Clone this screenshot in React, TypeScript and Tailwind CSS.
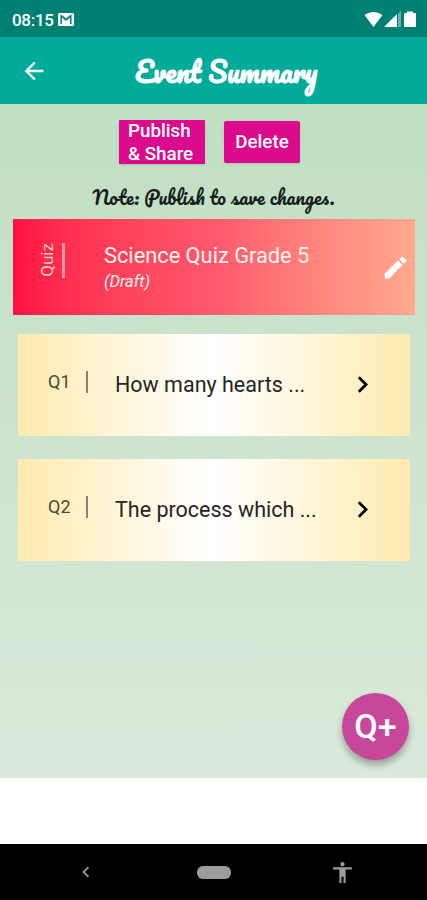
import React from "react";
import { MdAccessibility, MdArrowBack, MdChevronLeft, MdChevronRight, MdEdit } from "react-icons/md";

const questions = [
  { id: "Q1", text: "How many hearts ..." },
  { id: "Q2", text: "The process which ..." },
]

function StatusBar() {
  return (
    <div className="flex h-[37px] items-center justify-between bg-[#008073] pr-[10px] pl-[12px] text-white">
      <div className="flex items-center gap-[4px] pt-[2px]">
        <span className="text-[17px] leading-5 font-medium tracking-[-0.3px]">08:15</span>
        <svg width="16" height="13" viewBox="0 0 16 13" fill="none">
          <rect width="16" height="13" rx="1.5" fill="white" />
          <path d="M3.2 11V3L8 7L12.8 3V11" stroke="#008073" strokeWidth="1.5" />
          <path d="M3 1.8L8 5.6L13 1.8" stroke="#008073" strokeWidth="0.8" />
        </svg>
      </div>
      <svg width="53" height="17" viewBox="0 0 53 17" fill="white" className="mt-[2px]">
        <path d="M0.5 4Q9.5 -2 18.5 4L9.5 16Z" />
        <path d="M20 16L33 3V16Z" />
        <path d="M34 2.5L37 0V16H34Z" opacity="0.4" />
        <path d="M40 3Q40 2 41 2H43V0.5H49V2H51Q52 2 52 3V16H40Z" />
      </svg>
    </div>
  )
}

function QuestionCard({ id, text }: { id: string; text: string }) {
  return (
    <div className="mr-[17px] ml-[18px] flex h-[102px] rounded-[1px] bg-linear-to-r from-[#ffebae] via-white to-[#ffebae] pl-[30px] text-[#252525]">
      <span className="mt-[37px] w-[38px] text-[18px] leading-[22px] text-[#4c4636]">{id}</span>
      <div className="mt-[37px] h-[22px] w-[2px] bg-[#8b8370]" />
      <span className="mt-[37px] ml-[27px] w-[232px] text-[21.5px] leading-[28px] whitespace-nowrap">{text}</span>
      <MdChevronRight className="mt-[34px] -ml-[1px] size-[33px] text-black" />
    </div>
  )
}

export default function App() {
  return (
    <div className="flex h-[900px] w-[427px] flex-col overflow-hidden bg-white font-['Roboto',sans-serif]">
      <StatusBar />
      <header className="flex h-[67px] items-center bg-[#00ac99] text-white">
        <MdArrowBack className="ml-[20px] size-[28px]" />
        <h1 className="mt-[3px] ml-[87px] font-['Pacifico',cursive] text-[27.2px] leading-[36px] font-bold whitespace-nowrap">
          Event Summary
        </h1>
      </header>

      <main className="flex h-[674px] flex-col bg-linear-to-b from-[#c0dfc3] via-[#cde4d0] to-[#dae9d9]">
        <div className="flex h-[76px] items-center gap-[19px] pl-[119px] text-[18.8px] font-medium text-white">
          <button className="h-[44px] w-[86px] rounded-[1px] bg-[#dc0b8e] pl-[9px] text-left leading-[22.5px] whitespace-nowrap shadow">
            Publish
            <br />
            &amp; Share
          </button>
          <button className="h-[42px] w-[76px] rounded-[2px] bg-[#dc0b8e] shadow">Delete</button>
        </div>
        <p className="h-[39px] pt-[3px] text-center font-['Pacifico',cursive] text-[19.1px] leading-[28px] whitespace-nowrap text-[#142017]">
          Note: Publish to save changes.
        </p>

        <section className="mr-[12px] ml-[13px] flex h-[96px] shrink-0 bg-linear-to-r from-[#ff0e44] via-[#ff596c] to-[#ffa98f]">
          <div className="mt-[22px] ml-[22px] flex h-[38px] w-[24px] items-center justify-center">
            <span className="-rotate-90 text-[17px] leading-5 text-[#ffd2b8]">Quiz</span>
          </div>
          <div className="mt-[24px] ml-[3px] h-[35px] w-[3px] bg-[#ff9a9f]" />
          <div className="mt-[23px] ml-[26px] w-[290px] shrink-0 pl-[13px] text-[#fff1f0]">
            <h2 className="text-[21.8px] leading-[28px] whitespace-nowrap">Science Quiz Grade 5</h2>
            <p className="text-[16.5px] leading-[23px] italic">(Draft)</p>
          </div>
          <MdEdit className="mt-[34px] size-[29px] shrink-0 text-white" />
        </section>

        <div className="mt-[19px] flex flex-col gap-[23px]">
          {questions.map((question) => (
            <QuestionCard key={question.id} id={question.id} text={question.text} />
          ))}
        </div>
        <button className="mt-auto mr-[18px] mb-[18px] size-[67px] self-end rounded-full bg-[#c7479b] pb-[2px] text-[34px] leading-[40px] font-medium text-white shadow-[0_5px_7px_#0000004d]">
          Q+
        </button>
      </main>

      <div className="h-[66px] bg-white" />
      <nav className="flex h-[56px] items-center bg-black text-[#9c9c9c]">
        <MdChevronLeft className="ml-[75px] size-[22px]" />
        <div className="ml-[100px] h-[13px] w-[34px] rounded-[6px] bg-[#9c9c9c]" />
        <MdAccessibility className="ml-[99px] size-[25px]" />
      </nav>
    </div>
  )
}
